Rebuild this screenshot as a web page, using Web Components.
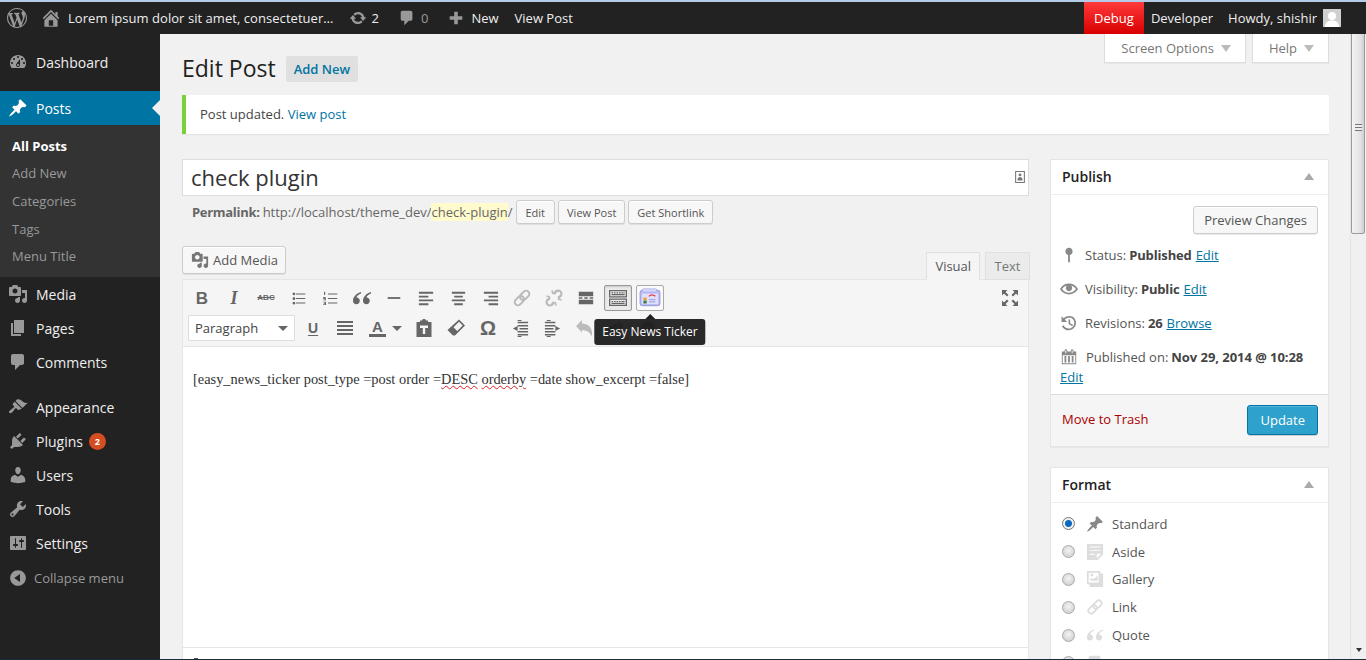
<!DOCTYPE html>
<html lang="en">
<head>
<meta charset="utf-8">
<title>Edit Post</title>
<style>
  html, body { margin: 0; height: 660px; overflow: hidden; background: #f1f1f1; }
  body { font: 13px "Open Sans", sans-serif; color: #444; }
</style>
</head>
<body>
<wp-shell>
  <wp-admin-bar slot="bar"></wp-admin-bar>
  <wp-side-menu slot="menu">
    <wp-menu-item icon="dashboard">Dashboard</wp-menu-item>
    <wp-menu-item icon="pin" current sep>Posts</wp-menu-item>
    <wp-submenu>
      <wp-submenu-item current>All Posts</wp-submenu-item>
      <wp-submenu-item>Add New</wp-submenu-item>
      <wp-submenu-item>Categories</wp-submenu-item>
      <wp-submenu-item>Tags</wp-submenu-item>
      <wp-submenu-item>Menu Title</wp-submenu-item>
    </wp-submenu>
    <wp-menu-item icon="media">Media</wp-menu-item>
    <wp-menu-item icon="page">Pages</wp-menu-item>
    <wp-menu-item icon="comment">Comments</wp-menu-item>
    <wp-menu-item icon="brush" style="margin-top:11px">Appearance</wp-menu-item>
    <wp-menu-item icon="plugin" badge="2">Plugins</wp-menu-item>
    <wp-menu-item icon="users">Users</wp-menu-item>
    <wp-menu-item icon="tools">Tools</wp-menu-item>
    <wp-menu-item icon="settings">Settings</wp-menu-item>
    <wp-collapse></wp-collapse>
  </wp-side-menu>
  <wp-edit-page></wp-edit-page>
  <wp-scrollbar slot="scroll"></wp-scrollbar>
</wp-shell>

<script>
(function() {
  'use strict';

  const p = d => `<path d="${d}"/>`;
  const chain = `<g transform="rotate(45 10 10)" fill="none" stroke="currentColor" stroke-width="2"><rect x="6.800" y="1" width="6.400" height="10.500" rx="3.200"/><rect x="6.800" y="8.500" width="6.400" height="10.500" rx="3.200"/></g>`;

  // ── icon set, all on a 20x20 grid ───────────────────────────────
  const ICONS = {
    wp: p('M20 10c0-5.51-4.49-10-10-10C4.48 0 0 4.49 0 10c0 5.52 4.48 10 10 10 5.51 0 10-4.48 10-10zM7.78 15.37L4.37 6.22c.55-.02 1.17-.08 1.17-.08.5-.06.44-1.13-.06-1.11 0 0-1.45.11-2.37.11-.18 0-.37 0-.58-.01C4.12 2.69 6.87 1.11 10 1.11c2.33 0 4.45.87 6.05 2.34-.68-.11-1.65.39-1.65 1.58 0 .74.45 1.36.9 2.1.35.61.55 1.36.55 2.46 0 1.49-1.4 5-1.4 5l-3.03-8.37c.54-.02.82-.17.82-.17.5-.05.44-1.25-.06-1.22 0 0-1.44.12-2.38.12-.87 0-2.33-.12-2.33-.12-.5-.03-.56 1.2-.06 1.22l.92.08 1.26 3.41zM17.41 10c.24-.64.74-1.87.43-4.25.7 1.29 1.05 2.71 1.05 4.25 0 3.29-1.73 6.24-4.4 7.78.97-2.59 1.94-5.2 2.92-7.78zM6.1 18.09C3.12 16.65 1.11 13.53 1.11 10c0-1.3.23-2.48.72-3.59C3.25 10.3 4.67 14.2 6.1 18.09zm4.03-6.63l2.58 6.98c-.86.29-1.76.45-2.71.45-.79 0-1.57-.11-2.29-.33.81-2.38 1.62-4.74 2.42-7.1z'),
    home: p('M16 8.5l1.53 1.53-1.06 1.06L10 4.62l-6.47 6.47-1.06-1.06L10 2.5l4 4v-2h2v4zm-6-2.46l6 5.99V18H4v-5.97zM12 17v-5H8v5h4z'),
    update: p('M10.2 3.28c3.53 0 6.43 2.61 6.92 6h2.08l-3.5 4-3.5-4h2.32c-.45-1.97-2.21-3.44-4.32-3.44-1.45 0-2.73.71-3.54 1.78L4.95 5.66C6.23 4.2 8.11 3.28 10.2 3.28zm-.4 13.44c-3.52 0-6.43-2.61-6.92-6H.8l3.5-4c1.17 1.33 2.33 2.67 3.5 4H5.48c.45 1.97 2.21 3.44 4.32 3.44 1.45 0 2.73-.71 3.54-1.78l1.71 1.95c-1.28 1.46-3.15 2.39-5.25 2.39z'),
    comment: p('M5 2h9c1.1 0 2 .9 2 2v7c0 1.1-.9 2-2 2h-2l-5 5v-5H5c-1.1 0-2-.9-2-2V4c0-1.1.9-2 2-2z'),
    plus: p('M17 8v4h-5v5H8v-5H3V8h5V3h4v5h5z'),
    dashboard: p('M3.76 16h12.48c1.1-1.37 1.76-3.11 1.76-5 0-4.42-3.58-8-8-8s-8 3.58-8 8c0 1.89.66 3.63 1.76 5zM10 4c.55 0 1 .45 1 1s-.45 1-1 1-1-.45-1-1 .45-1 1-1zM6 6c.55 0 1 .45 1 1s-.45 1-1 1-1-.45-1-1 .45-1 1-1zm8 0c.55 0 1 .45 1 1s-.45 1-1 1-1-.45-1-1 .45-1 1-1zm-5.37 5.55L12 7v6c0 1.1-.9 2-2 2s-2-.9-2-2c0-.57.24-1.08.63-1.45zM4 10c.55 0 1 .45 1 1s-.45 1-1 1-1-.45-1-1 .45-1 1-1zm12 0c.55 0 1 .45 1 1s-.45 1-1 1-1-.45-1-1 .45-1 1-1zm-5 3c0-.55-.45-1-1-1s-1 .45-1 1 .45 1 1 1 1-.45 1-1z'),
    pin: p('M10.44 3.02l1.82-1.82 6.36 6.35-1.83 1.82c-1.05-.68-2.48-.57-3.41.36l-.75.75c-.92.93-1.04 2.35-.35 3.41l-1.83 1.82-2.41-2.41-2.8 2.79c-.42.42-3.38 2.71-3.8 2.29s1.86-3.39 2.28-3.81l2.79-2.79L4.1 9.36l1.83-1.82c1.05.69 2.48.57 3.4-.36l.75-.75c.93-.92 1.05-2.35.36-3.41z'),
    media: p('M13 11V4c0-.55-.45-1-1-1h-1.67L9 1H5L3.67 3H2c-.55 0-1 .45-1 1v7c0 .55.45 1 1 1h10c.55 0 1-.45 1-1zM7 4.5c1.38 0 2.5 1.12 2.5 2.5S8.38 9.5 7 9.5 4.5 8.38 4.5 7 5.62 4.5 7 4.5zM14 6h5v10.5c0 1.38-1.12 2.5-2.5 2.5S14 17.88 14 16.5s1.12-2.5 2.5-2.5c.17 0 .34.02.5.05V9h-3V6zm-4 8.05V13h2v3.5c0 1.38-1.12 2.5-2.5 2.5S7 17.88 7 16.5 8.12 14 9.5 14c.17 0 .34.02.5.05z'),
    page: p('M6 15V2h10v13H6zm-1 1h8v2H3V5h2v11z'),
    brush: p('M14.48 11.06L7.41 3.99l1.5-1.5c.5-.56 2.3-.47 3.51.32 1.21.8 1.43 1.28 2.91 2.1 1.18.64 2.45 1.26 4.45.85zm-.71.71L6.7 4.7 4.93 6.47c-.39.39-.39 1.02 0 1.41l1.06 1.06c.39.39.39 1.03 0 1.42-.6.6-1.43 1.11-2.21 1.69-.35.26-.7.53-1.01.84C1.43 13.23.4 14.85 1.32 15.8c.95.94 2.57-.11 3.36-.95.31-.31.58-.66.85-1.02.57-.78 1.08-1.61 1.69-2.21.39-.39 1.02-.39 1.41 0l1.06 1.06c.39.39 1.02.39 1.41 0z'),
    plugin: p('M13.11 4.36L9.87 7.6 8 5.73l3.24-3.24c.35-.34 1.05-.2 1.56.32.52.51.66 1.21.31 1.55zm-8 1.77l.91-1.12 9.01 9.01-1.19.84c-.71.71-2.63 1.16-3.82 1.16H6.14L4.9 17.26c-.59.59-1.54.59-2.12 0-.59-.58-.59-1.53 0-2.12l1.24-1.24v-3.88c0-1.13.4-3.19 1.09-3.89zm7.26 3.97l3.24-3.24c.34-.35 1.04-.21 1.55.31.52.51.66 1.21.31 1.55l-3.24 3.25z'),
    users: p('M10 9.25c-2.27 0-2.73-3.44-2.73-3.44C7 4.02 7.82 2 9.97 2c2.16 0 2.98 2.02 2.71 3.81 0 0-.41 3.44-2.68 3.44zm0 2.57L12.72 10c2.39 0 4.52 2.33 4.52 4.53v2.49s-3.65 1.13-7.24 1.13c-3.65 0-7.24-1.13-7.24-1.13v-2.49c0-2.25 1.94-4.48 4.47-4.48z'),
    tools: p('M16.68 9.77c-1.34 1.34-3.3 1.67-4.95.99l-5.41 6.52c-.99.99-2.59.99-3.58 0s-.99-2.59 0-3.57l6.52-5.42c-.68-1.65-.35-3.61.99-4.95 1.28-1.28 3.12-1.62 4.72-1.06l-2.89 2.89 2.82 2.82 2.86-2.87c.53 1.58.18 3.39-1.08 4.65zM3.81 16.21c.4.39 1.04.39 1.43 0 .4-.4.4-1.04 0-1.43-.39-.4-1.03-.4-1.43 0-.39.39-.39 1.03 0 1.43z'),
    settings: p('M18 16V4c0-.55-.45-1-1-1H3c-.55 0-1 .45-1 1v12c0 .55.45 1 1 1h14c.55 0 1-.45 1-1zM8 11h1c.55 0 1 .45 1 1s-.45 1-1 1H8v1.5c0 .28-.22.5-.5.5s-.5-.22-.5-.5V13H6c-.55 0-1-.45-1-1s.45-1 1-1h1V5.5c0-.28.22-.5.5-.5s.5.22.5.5V11zm5-2h-1c-.55 0-1-.45-1-1s.45-1 1-1h1V5.5c0-.28.22-.5.5-.5s.5.22.5.5V7h1c.55 0 1 .45 1 1s-.45 1-1 1h-1v5.5c0 .28-.22.5-.5.5s-.5-.22-.5-.5V9z'),
    collapse: p('M10 2.16c4.33 0 7.84 3.51 7.84 7.84s-3.51 7.84-7.84 7.84S2.16 14.33 2.16 10 5.71 2.16 10 2.16zm2 11.72V6.12L6.18 9.97z'),
    status: p('M14 6c0-2.21-1.79-4-4-4S6 3.79 6 6c0 1.86 1.27 3.43 3 3.87V18h2V9.87c1.73-.44 3-2.01 3-3.87z'),
    eye: p('M19.7 9.4C17.7 6 14 3.9 10 3.9S2.3 6 .3 9.4L0 10l.3.6c2 3.4 5.7 5.5 9.7 5.5s7.7-2.1 9.7-5.5l.3-.6-.3-.6zM10 14.1c-3.1 0-6-1.6-7.7-4.1C3.6 8 5.7 6.6 8 6.1c-.9.6-1.5 1.7-1.5 2.9 0 1.9 1.6 3.5 3.5 3.5s3.5-1.6 3.5-3.5c0-1.2-.6-2.3-1.5-2.9 2.3.5 4.4 1.9 5.7 3.9-1.7 2.5-4.6 4.1-7.7 4.1z'),
    backup: p('M13.65 2.88c3.93 2.22 5.31 7.21 3.09 11.14-2.22 3.94-7.2 5.33-11.14 3.1-1.54-.87-2.7-2.16-3.41-3.63l1.78-.89c.54 1.13 1.42 2.11 2.6 2.77 2.99 1.69 6.79.64 8.48-2.36 1.69-2.99.64-6.79-2.35-8.48C10.25 3.56 7.26 4.12 5.3 6.08L8 8.78H1.69V2.47l2.38 2.38c2.45-2.52 6.42-3.19 9.58-1.97zM9.5 6h1.8v4.2l3.2 1.9-.9 1.5-4.1-2.5z'),
    calendar: p('M15 4h3v14H2V4h3V3c0-.83.67-1.5 1.5-1.5S8 2.17 8 3v1h4V3c0-.83.67-1.5 1.5-1.5S15 2.17 15 3v1zM6 3v2.5c0 .28.22.5.5.5s.5-.22.5-.5V3c0-.28-.22-.5-.5-.5S6 2.72 6 3zm7 0v2.5c0 .28.22.5.5.5s.5-.22.5-.5V3c0-.28-.22-.5-.5-.5S13 2.72 13 3zm4 14V8H3v9h14zM7 16V9H5v7h2zm4 0V9H9v7h2zm4 0V9h-2v7h2z'),
    aside: p('M1 1h18v12l-6 6H1V1zm3 3v1h12V4H4zm0 4v1h12V8H4zm6 5v-1H4v1h6zm2 4l5-5h-5v5z'),
    gallery: p('M16 4h1.96c.57 0 1.04.47 1.04 1.04v12.92c0 .57-.47 1.04-1.04 1.04H5.04C4.47 19 4 18.53 4 17.96V16H2.04C1.47 16 1 15.53 1 14.96V2.04C1 1.47 1.47 1 2.04 1h12.92c.57 0 1.04.47 1.04 1.04V4zM3 14h11V3H3v11zm5-8.5C8 4.67 7.33 4 6.5 4S5 4.67 5 5.5 5.67 7 6.5 7 8 6.33 8 5.5zM13 12V6l-3 3-2 1-3-1v3z'),
    link: chain,
    quote: p('M9 4C5 5 1 8.500 1 12.800c0 2 1.400 3.400 3.400 3.400s3.400-1.500 3.400-3.400-1.400-3.300-3.300-3.300c.2-1.800 2.300-3.400 4.500-4.100zm10 0c-4 1-8 4.500-8 8.800 0 2 1.400 3.400 3.400 3.400s3.400-1.500 3.400-3.400-1.400-3.300-3.300-3.300c.2-1.800 2.300-3.400 4.500-4.100z'),
    bullist: p('M3 4.5a1.6 1.6 0 1 1 0 .01zM3 10a1.6 1.6 0 1 1 0 .01zM3 15.5a1.6 1.6 0 1 1 0 .01zM7 4h11v1.4H7zM7 9.3h11v1.4H7zM7 14.6h11V16H7z'),
    numlist: p('M7 4h11v1.4H7zM7 9.3h11v1.4H7zM7 14.6h11V16H7zM2.4 2h1.3v4H2.4zM1.5 8.2h3.2v1H3.2v.6h1.5v2.4H1.5v-1h2.2v-.5H1.5zM1.5 13.7h3.2v4H1.5v-1h2.1v-.5H2.2v-1h1.4v-.5H1.5z'),
    hr: p('M3 9h14v2H3z'),
    alignleft: p('M2 3h15v2H2zM2 7h10v2H2zM2 11h15v2H2zM2 15h10v2H2z'),
    aligncenter: p('M3 3h14v2H3zM5.5 7h9v2h-9zM3 11h14v2H3zM5.5 15h9v2h-9z'),
    alignright: p('M3 3h15v2H3zM8 7h10v2H8zM3 11h15v2H3zM8 15h10v2H8z'),
    unlink: `<g transform="rotate(45 10 10)" fill="none" stroke="currentColor" stroke-width="2.200"><path d="M6.800 7.500V4a3.200 3.200 0 0 1 6.400 0v3.500M6.800 12.500V16a3.200 3.200 0 0 0 6.400 0v-3.500"/></g><path d="M2.500 8l3.500 1M8 2.500l1 3.500M17.500 12L14 11M12 17.500L11 14M12 2.500L11 6M17.500 8L14 9M2.500 12L6 11M8 17.500L9 14" stroke="currentColor" stroke-width="1.800"/>`,
    more: p('M2 3h16v5H2zM2 12h16v5H2zM2 9.3h4v1.4H2zM8 9.3h4v1.4H8zM14 9.3h4v1.4h-4z'),
    keyboard: `<path fill-rule="evenodd" d="M1 2h18v7.4H1zM2.3 3.2v5h15.4v-5zM1 10.6h18V18H1zM2.3 11.8v5h15.4v-5z"/><path d="M3.5 4.3h1.6v1.2H3.5zM6 4.3h1.6v1.2H6zM8.5 4.3h1.6v1.2H8.5zM11 4.3h1.6v1.2H11zM13.5 4.3h1.6v1.2h-1.6zM15.6 4.3h1v1.2h-1zM3.5 6h13.1v1.2H3.5zM3.5 12.9h1.6v1.2H3.5zM6 12.9h1.6v1.2H6zM8.5 12.9h1.6v1.2H8.5zM11 12.9h1.6v1.2H11zM13.5 12.9h3.1v1.2h-3.1zM3.5 14.7h13.1v1.2H3.5z"/>`,
    ticker: `<rect x="1" y="3" width="18" height="14" rx="2" fill="#b9bdf2" stroke="#8c90d8" stroke-width=".8"/><rect x="3" y="1.6" width="13" height="3" rx="1" fill="#d5d7fa" stroke="#9a9ee0" stroke-width=".5"/><rect x="2.5" y="6" width="15" height="9.5" rx="1" fill="#dfe0fb"/><path d="M9 8.500c1.500-1.600 4-1.600 6 0" fill="none" stroke="#e0323c" stroke-width="1.200"/><rect x="4" y="9.600" width="3" height="2.600" fill="#e8a33c"/><rect x="4" y="12.400" width="3" height="2.600" fill="#3a7a4d"/><path d="M9 11h6v1H9zM9 13h6v1H9z" fill="#a6a9e8"/>`,
    justify: p('M2 3h16v2H2zM2 7h16v2H2zM2 11h16v2H2zM2 15h16v2H2z'),
    paste: `<path fill-rule="evenodd" d="M2.500 4H6V2.500h2C8 1.500 9 1 10 1s2 .5 2 1.500h2V4h3.500v15h-15zM6 7.500v2.500h2.800V16h2.400v-6H14V7.500z"/>`,
    eraser: `<path fill-rule="evenodd" d="M13 1.500l6 6-10 10H7L1.500 12zM13 3.800L7.500 9.300l3.700 3.700L16.700 7.500z"/>`,
    outdent: p('M7 3h11v1.600H7zM7 6.200h11v1.600H7zM9 9.400h9V11H9zM7 12.600h11v1.600H7zM7 15.800h11v1.600H7zM7 18h4v1H7zM7 1h4v1H7zM7 7.300v5.400L2 10z'),
    indent: p('M2 3h11v1.600H2zM2 6.200h11v1.600H2zM2 9.400h9V11H2zM2 12.600h11v1.600H2zM2 15.800h11v1.600H2zM4 18h4v1H4zM4 1h4v1H4zM13 7.300v5.400l5-2.700z'),
    undo: p('M2 8l6-6v3.600c5.600 0 10 3.600 10 9.400 0 1.500-.3 2.500-.7 3.500-.5-3.600-4-6.300-9.300-6.300v2.300z'),
    redo: p('M18 8l-6-6v3.600C6.400 5.600 2 9.200 2 15c0 1.500.3 2.500.7 3.500.5-3.600 4-6.300 9.300-6.300v2.300z'),
    help: p('M10 2a8 8 0 1 1 0 16 8 8 0 0 1 0-16z'),
    fullscreen: p('M7.500 2L5.500 4 8.500 7 7 8.500 4 5.500 2 7.500V2zM12.500 2H18v5.500l-2-2L13 8.500 11.500 7l3-3zM2 12.500l2 2L7 11.500 8.500 13l-3 3 2 2H2zM18 18h-5.500l2-2-3-3 1.500-1.500 3 3 2-2z'),
    title: `<path fill-rule="evenodd" d="M3 1.500h14v17H3zM4.500 3v14h11V3zM10 5a2 2 0 1 1 0 4 2 2 0 0 1 0-4zM6.500 15v-2c0-1.500 1.500-3 3.500-3s3.500 1.500 3.500 3v2z"/>`
  };

  class WpIcon extends HTMLElement {
    connectedCallback() {
      const size = this.getAttribute('size') || 20;
      const name = this.getAttribute('name');
      this.attachShadow({ mode: 'open' }).innerHTML = `
        <style>
          :host { display: inline-flex; flex: none; width: ${size}px; height: ${size}px; }
          svg { display: block; width: 100%; height: 100%; fill: currentColor; }
        </style>
        <svg viewBox="0 0 20 20" aria-hidden="true">${ICONS[name] || ''}</svg>`;
    }
  }

  // ── page frame ──────────────────────────────────────────────────
  class WpShell extends HTMLElement {
    constructor() {
      super();
      this.attachShadow({ mode: 'open' }).innerHTML = `
        <style>
          :host { display: flex; flex-direction: column; height: 660px; overflow: hidden; background: #f1f1f1; border-top: 2px solid #b3cbe6; border-bottom: 1px solid #1d2d38; box-sizing: border-box; }
          .body { flex: 1; min-height: 0; display: flex; overflow: hidden; }
          .main { flex: 1; min-width: 0; overflow: hidden; }
        </style>
        <slot name="bar"></slot>
        <div class="body">
          <slot name="menu"></slot>
          <div class="main"><slot></slot></div>
          <slot name="scroll"></slot>
        </div>`;
    }
  }

  class WpAdminBar extends HTMLElement {
    constructor() {
      super();
      this.attachShadow({ mode: 'open' }).innerHTML = `
        <style>
          :host { display: flex; justify-content: space-between; height: 32px; background: #222; color: #eee; font: 13px/32px "Open Sans", sans-serif; padding-right: 25px; }
          .group { display: flex; align-items: center; }
          .item { display: flex; align-items: center; height: 32px; white-space: nowrap; }
          wp-icon { color: #999; }
          .mute { color: #999; }
          .debug { background: linear-gradient(#ff3a3a, #d80000); width: 60px; justify-content: center; color: #fff; }
          .avatar { width: 18px; height: 18px; margin-left: 6px; display: block; }
        </style>
        <div class="group">
          <div class="item" style="margin-left:7px"><wp-icon name="wp" size="20"></wp-icon></div>
          <div class="item" style="margin-left:13px"><wp-icon name="home" size="22"></wp-icon><span style="margin-left:6px;letter-spacing:.05px">Lorem ipsum dolor sit amet, consectetuer…</span></div>
          <div class="item" style="margin-left:15px"><wp-icon name="update" size="18"></wp-icon><span style="margin-left:5px">2</span></div>
          <div class="item" style="margin-left:19px"><wp-icon name="comment" size="18"></wp-icon><span class="mute" style="margin-left:5px">0</span></div>
          <div class="item" style="margin-left:19px"><wp-icon name="plus" size="18"></wp-icon><span style="margin-left:6px">New</span></div>
          <div class="item" style="margin-left:16px">View Post</div>
        </div>
        <div class="group">
          <div class="item debug">Debug</div>
          <div class="item" style="margin-left:7px">Developer</div>
          <div class="item" style="margin-left:15px">Howdy, shishir
            <svg class="avatar" viewBox="0 0 18 18"><rect width="18" height="18" fill="#d0d0d0"/><circle cx="9" cy="7" r="4" fill="#fff"/><path d="M2 18c0-5 3-6.500 7-6.500s7 1.500 7 6.500z" fill="#fff"/></svg>
          </div>
        </div>`;
    }
  }

  // ── left menu ───────────────────────────────────────────────────
  class WpSideMenu extends HTMLElement {
    constructor() {
      super();
      this.attachShadow({ mode: 'open' }).innerHTML = `
        <style>
          :host { display: block; flex: none; width: 160px; height: 100%; background: #222; padding-top: 11px; box-sizing: border-box; font-family: "Open Sans", sans-serif; }
        </style>
        <slot></slot>`;
    }
  }

  class WpMenuItem extends HTMLElement {
    connectedCallback() {
      const badge = this.getAttribute('badge');
      this.attachShadow({ mode: 'open' }).innerHTML = `
        <style>
          :host { display: flex; align-items: center; position: relative; height: 34px; color: #eee; font-size: 14px; padding-left: 8px; }
          :host([sep]) { margin-top: 12px; }
          :host([current]) { background: #0074a2; color: #fff; }
          wp-icon { color: #999; margin-right: 8px; }
          :host([current]) wp-icon { color: #fff; }
          :host([current])::after { content: ""; position: absolute; right: 0; top: 9px; border: 8px solid transparent; border-right-color: #f1f1f1; border-left-width: 0; }
          .badge { margin-left: 6px; width: 17px; height: 17px; border-radius: 50%; background: #d54e21; color: #fff; font-size: 9px; font-weight: 700; line-height: 17px; text-align: center; }
        </style>
        <wp-icon name="${this.getAttribute('icon')}"></wp-icon><slot></slot>${badge ? `<span class="badge">${badge}</span>` : ''}`;
    }
  }

  class WpSubmenu extends HTMLElement {
    constructor() {
      super();
      this.attachShadow({ mode: 'open' }).innerHTML = `
        <style>:host { display: block; background: #333; padding: 7px 0; height: 152px; box-sizing: border-box; }</style>
        <slot></slot>`;
    }
  }

  class WpSubmenuItem extends HTMLElement {
    constructor() {
      super();
      this.attachShadow({ mode: 'open' }).innerHTML = `
        <style>
          :host { display: flex; align-items: center; height: 27.6px; padding-left: 12px; font-size: 13px; color: #999; }
          :host([current]) { color: #fff; font-weight: 700; }
        </style>
        <slot></slot>`;
    }
  }

  class WpCollapse extends HTMLElement {
    constructor() {
      super();
      this.attachShadow({ mode: 'open' }).innerHTML = `
        <style>
          :host { display: flex; align-items: center; height: 34px; margin-top: 1px; padding-left: 8px; color: #999; font-size: 13px; }
          wp-icon { margin-right: 6px; }
        </style>
        <wp-icon name="collapse"></wp-icon>Collapse menu`;
    }
  }

  // ── shared widgets ──────────────────────────────────────────────
  class WpButton extends HTMLElement {
    constructor() {
      super();
      this.attachShadow({ mode: 'open' }).innerHTML = `
        <style>
          :host { display: inline-flex; align-items: center; justify-content: center; box-sizing: border-box; height: 28px; padding: 0 10px; gap: 4px; background: #f7f7f7; border: 1px solid #ccc; border-radius: 3px; box-shadow: inset 0 1px 0 #fff, 0 1px 0 rgba(0,0,0,.08); color: #555; font: 13px "Open Sans", sans-serif; white-space: nowrap; }
          :host([small]) { height: 24px; padding: 0 8px; font-size: 11px; }
          :host([primary]) { background: #2ea2cc; border-color: #0074a2; color: #fff; box-shadow: inset 0 1px 0 rgba(120,200,230,.5), 0 1px 0 rgba(0,0,0,.15); height: 30px; padding: 0 12px; }
        </style>
        <slot></slot>`;
    }
  }

  class WpNotice extends HTMLElement {
    constructor() {
      super();
      this.attachShadow({ mode: 'open' }).innerHTML = `
        <style>
          :host { display: block; background: #fff; border-left: 4px solid #7ad03a; box-shadow: 0 1px 1px rgba(0,0,0,.06); padding: 0 14px; line-height: 39px; font-size: 13px; color: #444; }
        </style>
        <slot></slot>`;
    }
  }

  class WpTooltip extends HTMLElement {
    constructor() {
      super();
      this.attachShadow({ mode: 'open' }).innerHTML = `
        <style>
          :host { position: absolute; left: 50%; top: 33px; transform: translateX(-50%); background: rgba(32,32,32,.96); color: #fff; font: 12px/26px "Open Sans", sans-serif; padding: 0 8px; border-radius: 3px; white-space: nowrap; z-index: 5; }
          :host::before { content: ""; position: absolute; left: 50%; top: -5px; margin-left: -5px; border: 5px solid transparent; border-top-width: 0; border-bottom-color: #202020; }
        </style>
        <slot></slot>`;
    }
  }

  // ── editor toolbar ──────────────────────────────────────────────
  class WpToolBtn extends HTMLElement {
    connectedCallback() {
      const name = this.getAttribute('icon');
      const size = this.getAttribute('size') || 20;
      this.attachShadow({ mode: 'open' }).innerHTML = `
        <style>
          :host { display: flex; align-items: center; justify-content: center; flex: none; box-sizing: border-box; position: relative; width: 28px; height: 26px; color: #666; }
          :host([off]) { color: #bbb; }
          :host([pressed]) { background: #ebebeb; border: 1px solid #999; border-radius: 2px; box-shadow: inset 0 1px 2px rgba(0,0,0,.15); }
          :host([hover]) { background: #fafafa; border: 1px solid #aaa; border-radius: 2px; }
          :host([wide]) { width: 43px; justify-content: flex-start; padding-left: 6px; }
          :host([wide])::after { content: ""; margin-left: 6px; border: 5px solid transparent; border-bottom-width: 0; border-top-color: #666; }
        </style>
        ${name ? `<wp-icon name="${name}" size="${size}"></wp-icon>` : ''}<slot></slot>`;
    }
  }

  class WpEditor extends HTMLElement {
    constructor() {
      super();
      this.attachShadow({ mode: 'open' }).innerHTML = `
        <style>
          :host { display: block; font-family: "Open Sans", sans-serif; }
          .head { display: flex; justify-content: space-between; align-items: flex-start; height: 34px; }
          .tabs { display: flex; gap: 5px; align-self: flex-end; margin-right: -1px; position: relative; z-index: 2; }
          .tab { box-sizing: border-box; height: 28px; line-height: 27px; padding: 0 8.5px; border: 1px solid #e0e0e0; background: #ebebeb; color: #777; font-size: 13px; }
          .tab.on { background: #f5f5f5; border-bottom-color: #f5f5f5; color: #555; padding: 0 8px; }
          .box { border: 1px solid #e5e5e5; background: #fff; height: 379px; display: flex; flex-direction: column; margin-top: -1px; }
          .toolbar { background: #f5f5f5; border-bottom: 1px solid #e5e5e5; padding: 5px 5px 4px; height: 57px; display: flex; flex-direction: column; gap: 4px; flex: none; }
          .row { display: flex; gap: 4px; align-items: center; height: 26px; }
          .push { margin-left: auto; margin-right: -1px; }
          .select { box-sizing: border-box; width: 107px; height: 26px; background: #fff; border: 1px solid #ddd; padding-left: 6px; color: #444; font-size: 13px; display: flex; align-items: center; justify-content: space-between; padding-right: 6px; }
          .select::after { content: ""; border: 5px solid transparent; border-bottom-width: 0; border-top-color: #666; }
          .b { font: 700 17px/1 "Liberation Sans", sans-serif; }
          .i { font: italic 700 18px/1 "Liberation Serif", serif; }
          .abc { font: 700 8px/1 "Liberation Sans", sans-serif; text-decoration: line-through; }
          .u { font: 700 14px/1 "Liberation Sans", sans-serif; text-decoration: underline; text-underline-offset: 2px; }
          .a { font: 700 15px/1 "Liberation Sans", sans-serif; border-bottom: 3px solid #666; padding: 0 3px; }
          .om { font: 700 20px/1 "Liberation Sans", sans-serif; }
          .content { flex: 1; padding: 22px 10px; font: 14.4px/20px "Liberation Serif", serif; color: #333; }
          .content span { text-decoration: underline wavy #e02020; text-decoration-thickness: 1px; }
          .status { flex: none; height: 12px; border-top: 1px solid #e5e5e5; padding: 10px 0 0 11px; box-sizing: border-box; }
          .status i { display: block; width: 4px; height: 2px; background: #555; }
        </style>
        <div class="head">
          <wp-button style="padding:0 7px 0 8px"><wp-icon name="media" size="18" style="color:#777"></wp-icon>Add Media</wp-button>
          <div class="tabs"><div class="tab on">Visual</div><div class="tab">Text</div></div>
        </div>
        <div class="box">
          <div class="toolbar">
            <div class="row">
              <wp-tool-btn><span class="b">B</span></wp-tool-btn>
              <wp-tool-btn><span class="i">I</span></wp-tool-btn>
              <wp-tool-btn><span class="abc">ABC</span></wp-tool-btn>
              <wp-tool-btn icon="bullist" size="17"></wp-tool-btn>
              <wp-tool-btn icon="numlist" size="17"></wp-tool-btn>
              <wp-tool-btn icon="quote" size="20"></wp-tool-btn>
              <wp-tool-btn icon="hr" size="18"></wp-tool-btn>
              <wp-tool-btn icon="alignleft" size="19"></wp-tool-btn>
              <wp-tool-btn icon="aligncenter" size="19"></wp-tool-btn>
              <wp-tool-btn icon="alignright" size="19"></wp-tool-btn>
              <wp-tool-btn icon="link" size="20" off></wp-tool-btn>
              <wp-tool-btn icon="unlink" size="20" off></wp-tool-btn>
              <wp-tool-btn icon="more" size="18"></wp-tool-btn>
              <wp-tool-btn icon="keyboard" size="20" pressed></wp-tool-btn>
              <wp-tool-btn icon="ticker" size="22" hover><wp-tooltip>Easy News Ticker</wp-tooltip></wp-tool-btn>
              <wp-tool-btn icon="fullscreen" size="20" class="push"></wp-tool-btn>
            </div>
            <div class="row">
              <div class="select">Paragraph</div>
              <wp-tool-btn><span class="u">U</span></wp-tool-btn>
              <wp-tool-btn icon="justify" size="20"></wp-tool-btn>
              <wp-tool-btn wide><span class="a">A</span></wp-tool-btn>
              <wp-tool-btn icon="paste" size="20"></wp-tool-btn>
              <wp-tool-btn icon="eraser" size="20"></wp-tool-btn>
              <wp-tool-btn><span class="om">Ω</span></wp-tool-btn>
              <wp-tool-btn icon="outdent" size="19"></wp-tool-btn>
              <wp-tool-btn icon="indent" size="19"></wp-tool-btn>
              <wp-tool-btn icon="undo" size="20" off></wp-tool-btn>
              <wp-tool-btn icon="redo" size="20"></wp-tool-btn>
              <wp-tool-btn icon="help" size="18"></wp-tool-btn>
            </div>
          </div>
          <div class="content">[easy_news_ticker post_type =post order =<span>DESC</span> <span>orderby</span> =date show_excerpt =false]</div>
          <div class="status"><i></i></div>
        </div>`;
    }
  }

  // ── sidebar ─────────────────────────────────────────────────────
  class WpMetabox extends HTMLElement {
    connectedCallback() {
      this.attachShadow({ mode: 'open' }).innerHTML = `
        <style>
          :host { display: block; background: #fff; border: 1px solid #e5e5e5; box-shadow: 0 1px 1px rgba(0,0,0,.04); font-family: "Open Sans", sans-serif; }
          .title { display: flex; align-items: center; justify-content: space-between; box-sizing: border-box; height: 35px; padding: 0 14px 2px 11px; border-bottom: 1px solid #eee; font-size: 14px; font-weight: 600; color: #222; }
          .title::after { content: ""; border: 5px solid transparent; border-top-width: 0; border-bottom: 7px solid #aaa; }
        </style>
        <div class="title">${this.getAttribute('heading')}</div>
        <slot></slot>`;
    }
  }

  class WpPublishBox extends HTMLElement {
    constructor() {
      super();
      this.attachShadow({ mode: 'open' }).innerHTML = `
        <style>
          :host { display: block; font-size: 13px; color: #555; }
          .preview { display: flex; justify-content: flex-end; padding: 11px 10px 4px; }
          .line { display: flex; align-items: center; height: 34px; padding-left: 9px; white-space: nowrap; }
          .line wp-icon { color: #888; margin-right: 7px; }
          b { font-weight: 700; color: #444; margin: 0 3px; }
          .line b { letter-spacing: -.15px; }
          a { color: #0074a2; text-decoration: underline; margin-left: 1px; }
          .date { padding: 7px 0 7px 9px; line-height: 20px; }
          .date div { display: flex; align-items: center; height: 20px; white-space: nowrap; }
          .date b { letter-spacing: -.05px; }
          .date a { margin-left: 0; display: block; height: 20px; }
          .foot { display: flex; justify-content: space-between; align-items: center; box-sizing: border-box; border-top: 1px solid #ddd; background: #f5f5f5; height: 52px; padding: 0 10px 2px 11px; }
          .foot a { color: #a00; text-decoration: none; margin: 0 0 2px; }
        </style>
        <div class="preview"><wp-button>Preview Changes</wp-button></div>
        <div class="line"><wp-icon name="status" size="18"></wp-icon>Status:<b>Published</b><a>Edit</a></div>
        <div class="line"><wp-icon name="eye" size="18"></wp-icon>Visibility:<b>Public</b><a>Edit</a></div>
        <div class="line"><wp-icon name="backup" size="18"></wp-icon>Revisions:<b>26</b><a>Browse</a></div>
        <div class="date"><div><wp-icon name="calendar" size="18" style="color:#888;margin-right:8px"></wp-icon>Published on:<b>Nov 29, 2014 @ 10:28</b></div><a style="width:max-content">Edit</a></div>
        <div class="foot"><a>Move to Trash</a><wp-button primary>Update</wp-button></div>`;
    }
  }

  class WpFormatRow extends HTMLElement {
    connectedCallback() {
      this.attachShadow({ mode: 'open' }).innerHTML = `
        <style>
          :host { display: flex; align-items: center; height: 27.8px; padding-left: 11px; font-size: 13px; color: #555; }
          .radio { box-sizing: border-box; width: 13px; height: 13px; border-radius: 50%; border: 1px solid #aaa; background: radial-gradient(circle at 50% 40%, #f4f4f4, #c8c8c8); margin-right: 11px; flex: none; }
          :host([checked]) .radio { background: radial-gradient(circle, #0a68c0 0 3px, #f0f0f0 4px); border-color: #777; }
          wp-icon { color: #ddd; margin-right: 8px; }
          :host([checked]) wp-icon { color: #888; }
        </style>
        <span class="radio"></span><wp-icon name="${this.getAttribute('icon')}" size="18"></wp-icon><slot></slot>`;
    }
  }

  // ── page content ────────────────────────────────────────────────
  class WpEditPage extends HTMLElement {
    constructor() {
      super();
      this.attachShadow({ mode: 'open' }).innerHTML = `
        <style>
          :host { display: block; padding: 0 21px 0 22px; font-family: "Open Sans", sans-serif; color: #444; }
          .top { display: flex; justify-content: space-between; align-items: flex-start; height: 61px; }
          .heading { display: flex; align-items: flex-start; gap: 10px; padding-top: 21px; }
          h1 { margin: 0; font-size: 23px; font-weight: 400; line-height: 26px; color: #222; }
          .addnew { margin-top: 1px; background: #e0e0e0; color: #0074a2; font-size: 13px; font-weight: 600; padding: 0 8px; line-height: 26px; border-radius: 2px; }
          .meta { display: flex; gap: 6px; }
          .meta div { display: flex; align-items: center; gap: 7px; box-sizing: border-box; height: 29px; padding: 0 14px 0 16px; background: #fff; border: solid #ddd; border-width: 0 1px 1px; color: #777; font-size: 13px; box-shadow: 0 1px 1px rgba(0,0,0,.04); }
          .meta div::after { content: ""; border: 5px solid transparent; border-bottom-width: 0; border-top: 7px solid #bbb; }
          a { color: #0074a2; }
          .cols { display: flex; gap: 21px; margin-top: 25px; align-items: flex-start; }
          .left { width: 847px; flex: none; }
          .right { width: 279px; flex: none; }
          .title { box-sizing: border-box; height: 37px; background: #fff; border: 1px solid #ddd; display: flex; align-items: center; justify-content: space-between; padding: 0 1px 2px 8px; font-size: 22px; color: #333; }
          .title wp-icon { color: #777; }
          .perma { display: flex; align-items: center; height: 24px; margin-top: 4px; padding-left: 10px; font-size: 13px; color: #666; white-space: nowrap; }
          .perma b { font-weight: 700; margin-right: 3px; letter-spacing: -.3px; }
          .perma mark { background: #fffbcc; color: inherit; }
          .perma wp-button { margin-left: 3px; }
          wp-editor { margin-top: 22px; }
          wp-metabox + wp-metabox { margin-top: 20px; }
          .fmt { padding: 7px 0 0; }
        </style>
        <div class="top">
          <div class="heading"><h1>Edit Post</h1><span class="addnew">Add New</span></div>
          <div class="meta"><div>Screen Options</div><div>Help</div></div>
        </div>
        <wp-notice>Post updated. <a>View post</a></wp-notice>
        <div class="cols">
          <div class="left">
            <div class="title">check plugin<wp-icon name="title" size="14"></wp-icon></div>
            <div class="perma"><b>Permalink:</b>http://localhost/theme_dev/<mark>check-plugin</mark>/<wp-button small style="padding:0 9px">Edit</wp-button><wp-button small>View Post</wp-button><wp-button small>Get Shortlink</wp-button></div>
            <wp-editor></wp-editor>
          </div>
          <div class="right">
            <wp-metabox heading="Publish"><wp-publish-box></wp-publish-box></wp-metabox>
            <wp-metabox heading="Format">
              <div class="fmt">
                <wp-format-row icon="pin" checked>Standard</wp-format-row>
                <wp-format-row icon="aside">Aside</wp-format-row>
                <wp-format-row icon="gallery">Gallery</wp-format-row>
                <wp-format-row icon="link">Link</wp-format-row>
                <wp-format-row icon="quote">Quote</wp-format-row>
                <wp-format-row icon="comment">Status</wp-format-row>
              </div>
            </wp-metabox>
          </div>
        </div>`;
    }
  }

  class WpScrollbar extends HTMLElement {
    constructor() {
      super();
      this.attachShadow({ mode: 'open' }).innerHTML = `
        <style>
          :host { display: flex; flex-direction: column; flex: none; width: 16px; background: #f0f0f0; border-left: 1px solid #e4e4e4; box-sizing: border-box; margin-top: -32px; position: relative; z-index: 3; height: calc(100% + 32px); }
          .arrow { height: 18px; display: flex; align-items: center; justify-content: center; flex: none; }
          .arrow::after { content: ""; border: 3.5px solid transparent; border-top-width: 0; border-bottom: 4px solid #333; }
          .arrow.down::after { border-bottom: 0; border-top: 4px solid #333; }
          .thumb { height: 214px; margin: 0 1px 0 0; background: linear-gradient(90deg, #f4f4f4, #e2e2e2 70%, #cfcfcf); border: 1px solid #9a9a9a; border-radius: 2px; box-sizing: border-box; display: flex; align-items: center; justify-content: center; flex: none; }
          .thumb::after { content: ""; width: 7px; height: 7px; background: repeating-linear-gradient(#777 0 1px, #eee 1px 3px); }
          .fill { flex: 1; }
        </style>
        <div class="arrow"></div><div class="thumb"></div><div class="fill"></div><div class="arrow down"></div>`;
    }
  }

  customElements.define('wp-icon', WpIcon);
  customElements.define('wp-shell', WpShell);
  customElements.define('wp-admin-bar', WpAdminBar);
  customElements.define('wp-side-menu', WpSideMenu);
  customElements.define('wp-menu-item', WpMenuItem);
  customElements.define('wp-submenu', WpSubmenu);
  customElements.define('wp-submenu-item', WpSubmenuItem);
  customElements.define('wp-collapse', WpCollapse);
  customElements.define('wp-button', WpButton);
  customElements.define('wp-notice', WpNotice);
  customElements.define('wp-tooltip', WpTooltip);
  customElements.define('wp-tool-btn', WpToolBtn);
  customElements.define('wp-editor', WpEditor);
  customElements.define('wp-metabox', WpMetabox);
  customElements.define('wp-publish-box', WpPublishBox);
  customElements.define('wp-format-row', WpFormatRow);
  customElements.define('wp-edit-page', WpEditPage);
  customElements.define('wp-scrollbar', WpScrollbar);
})();
</script>
</body>
</html>
